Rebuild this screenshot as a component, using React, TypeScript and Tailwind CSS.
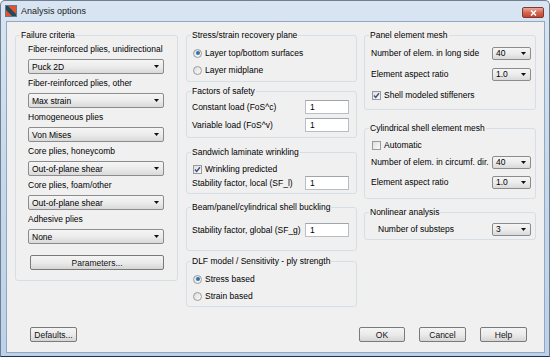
import React from "react"

function GroupBox({ title, className = "", children }: { title: string; className?: string; children: React.ReactNode }) {
  return (
    <fieldset className="rounded-[3px] border border-[#d5dfe5]">
      <legend className="ml-[4px] px-[1px] leading-[12px]">{title}</legend>
      <div className={className}>{children}</div>
    </fieldset>
  )
}

function Combo({ value, className = "" }: { value: string; className?: string }) {
  return (
    <div
      className={
        "flex items-center justify-between rounded-[2px] border border-[#8c8c8c] bg-gradient-to-b from-[#f5f5f5] via-[#ececec] to-[#d9d9d9] pl-[3px] pr-[4px] leading-[12px] " +
        className
      }
    >
      <span>{value}</span>
      <svg width="5" height="3" viewBox="0 0 5 3">
        <path d="M0 0h5L2.5 3z" fill="#111" />
      </svg>
    </div>
  )
}

function TextBox({ value }: { value: string }) {
  return (
    <div className="h-[14px] w-[44px] border border-[#b9bdc4] border-t-[#a0a4ab] bg-white pl-[4px] leading-[12px]">
      {value}
    </div>
  )
}

function Radio({ checked, label }: { checked?: boolean; label: string }) {
  return (
    <div className="flex h-[14px] items-center gap-[2px] pl-[1px]">
      <span className="flex h-[9px] w-[9px] items-center justify-center rounded-full border border-[#9a9a9a] bg-gradient-to-br from-[#dcdcdc] to-[#fbfbfb]">
        {checked && <span className="h-[4px] w-[4px] rounded-full bg-[#2a73b8]" />}
      </span>
      <span className="ml-[1px] leading-[12px]">{label}</span>
    </div>
  )
}

function Check({ checked, label }: { checked?: boolean; label: string }) {
  return (
    <div className="flex h-[14px] items-center gap-[3px] pl-[1px]">
      <span className="flex h-[9px] w-[9px] items-center justify-center border border-[#9a9a9a] bg-gradient-to-br from-[#dedede] to-[#fafafa]">
        {checked && (
          <svg width="7" height="7" viewBox="0 0 7 7">
            <path d="M1 3.6l1.7 1.8L6 1.2" stroke="#3b4f86" strokeWidth="1.4" fill="none" />
          </svg>
        )}
      </span>
      <span className="leading-[12px]">{label}</span>
    </div>
  )
}

function Button({ children, className = "" }: { children: React.ReactNode; className?: string }) {
  return (
    <button
      className={
        "h-[15px] rounded-[2px] border border-[#7a7a7a] bg-gradient-to-b from-[#f4f4f4] via-[#ebebeb] to-[#d5d5d5] leading-[12px] text-[#111] " +
        className
      }
    >
      {children}
    </button>
  )
}

const failure = [
  ["Fiber-reinforced plies, unidirectional", "Puck 2D"],
  ["Fiber-reinforced plies, other", "Max strain"],
  ["Homogeneous plies", "Von Mises"],
  ["Core plies, honeycomb", "Out-of-plane shear"],
  ["Core plies, foam/other", "Out-of-plane shear"],
  ["Adhesive plies", "None"],
]

export default function App() {
  return (
    <div className="flex h-[357px] w-[550px] flex-col rounded-t-[5px] border border-[#6e7f90] border-b-[#1f3446] bg-gradient-to-b from-[#d9e5f3] via-[#c6d8ec] to-[#bcd2ea] font-['Liberation_Sans',Arial,sans-serif] text-[8.5px] text-black">
      {/* title bar */}
      <div className="flex h-[20px] items-center pl-[4px] pr-[5px]">
        <svg width="12" height="12" viewBox="0 0 12 12">
          <rect width="12" height="12" fill="#1f4a60" />
          <path d="M2 0H12V10Z" fill="#e4532b" />
          <path d="M0 4L8 12H0Z" fill="#e4532b" />
          <rect x="0.5" y="0.5" width="11" height="11" fill="none" stroke="#6b7a88" />
        </svg>
        <span className="ml-[4px] text-[9px] leading-[12px] text-[#1b1b1b]">Analysis options</span>
        <div className="mt-[6px] ml-auto flex h-[11px] w-[22px] self-start items-center justify-center rounded-[2px] border border-[#7b3b32] bg-gradient-to-b from-[#e9a99b] via-[#d46652] to-[#c5432d]">
          <svg width="7" height="6" viewBox="0 0 7 6">
            <path d="M1 0.5L6 5.5M6 0.5L1 5.5" stroke="#fff" strokeWidth="1.5" />
          </svg>
        </div>
      </div>

      {/* client area */}
      <div className="mb-[3px] ml-[5px] mr-[4px] flex flex-1 flex-col border border-[#93a8bf] bg-[#f0f0f0]">
        <div className="flex pl-[8px] pt-[7px]">
          {/* left column */}
          <div className="w-[163px]">
            <GroupBox title="Failure criteria" className="pb-[10px] pl-[12px] pr-[13px] pt-[2px]">
              <div className="flex flex-col gap-[3px]">
                {failure.map(([label, value]) => (
                  <div key={label} className="flex flex-col gap-[4px]">
                    <span className="leading-[12px]">{label}</span>
                    <Combo value={value} className="h-[15px]" />
                  </div>
                ))}
              </div>
              <Button className="ml-[2px] mt-[11px] w-[134px]">Parameters...</Button>
            </GroupBox>
          </div>

          {/* middle column */}
          <div className="ml-[8px] flex w-[171px] flex-col">
            <GroupBox title="Stress/strain recovery plane" className="flex flex-col gap-[3px] pb-[4px] pl-[5px] pt-[5px]">
              <Radio checked label="Layer top/bottom surfaces" />
              <Radio label="Layer midplane" />
            </GroupBox>
            <div className="mt-[3px]">
              <GroupBox title="Factors of safety" className="flex flex-col gap-[4px] pb-[5px] pl-[5px] pr-[7px] pt-[3px]">
                <div className="flex items-center justify-between">
                  <span className="leading-[12px]">Constant load (FoS^c)</span>
                  <TextBox value="1" />
                </div>
                <div className="flex items-center justify-between">
                  <span className="leading-[12px]">Variable load (FoS^v)</span>
                  <TextBox value="1" />
                </div>
              </GroupBox>
            </div>
            <div className="mt-[8px]">
              <GroupBox title="Sandwich laminate wrinkling" className="flex flex-col pb-[3px] pl-[5px] pr-[7px] pt-[4px]">
                <Check checked label="Wrinkling predicted" />
                <div className="flex items-center justify-between">
                  <span className="leading-[12px]">Stability factor, local (SF_l)</span>
                  <TextBox value="1" />
                </div>
              </GroupBox>
            </div>
            <div className="mt-[7px]">
              <GroupBox title="Beam/panel/cylindrical shell buckling" className="pb-[13px] pl-[5px] pr-[7px] pt-[10px]">
                <div className="flex items-center justify-between">
                  <span className="leading-[12px]">Stability factor, global (SF_g)</span>
                  <TextBox value="1" />
                </div>
              </GroupBox>
            </div>
            <div className="mt-[4px]">
              <GroupBox title="DLF model / Sensitivity - ply strength" className="flex flex-col gap-[3px] pb-[3px] pl-[5px] pt-[5px]">
                <Radio checked label="Stress based" />
                <Radio label="Strain based" />
              </GroupBox>
            </div>
          </div>

          {/* right column */}
          <div className="ml-[7px] flex w-[172px] flex-col">
            <GroupBox title="Panel element mesh" className="flex flex-col gap-[7px] pb-[7px] pl-[6px] pr-[4px] pt-[5px]">
              <div className="flex h-[14px] items-center justify-between">
                <span className="leading-[12px]">Number of elem. in long side</span>
                <Combo value="40" className="h-[13px] w-[39px]" />
              </div>
              <div className="flex h-[14px] items-center justify-between">
                <span className="leading-[12px]">Element aspect ratio</span>
                <Combo value="1.0" className="h-[13px] w-[39px]" />
              </div>
              <Check checked label="Shell modeled stiffeners" />
            </GroupBox>
            <div className="mt-[12px]">
              <GroupBox title="Cylindrical shell element mesh" className="flex flex-col pb-[9px] pl-[6px] pr-[4px] pt-[4px]">
                <Check label="Automatic" />
                <div className="mt-[3px] flex h-[14px] items-center justify-between">
                  <span className="leading-[12px]">Number of elem. in circumf. dir.</span>
                  <Combo value="40" className="h-[13px] w-[39px]" />
                </div>
                <div className="mt-[6px] flex h-[14px] items-center justify-between">
                  <span className="leading-[12px]">Element aspect ratio</span>
                  <Combo value="1.0" className="h-[13px] w-[39px]" />
                </div>
              </GroupBox>
            </div>
            <div className="mt-[7px]">
              <GroupBox title="Nonlinear analysis" className="pb-[3px] pl-[13px] pr-[4px] pt-[4px]">
                <div className="flex h-[14px] items-center justify-between">
                  <span className="leading-[12px]">Number of substeps</span>
                  <Combo value="3" className="h-[13px] w-[39px]" />
                </div>
              </GroupBox>
            </div>
          </div>
        </div>

        {/* bottom buttons */}
        <div className="mt-auto flex items-center pb-[10px] pl-[23px] pr-[17px]">
          <Button className="w-[47px]">Defaults...</Button>
          <div className="ml-auto flex gap-[14px]">
            <Button className="w-[46px]">OK</Button>
            <Button className="w-[47px]">Cancel</Button>
            <Button className="w-[47px]">Help</Button>
          </div>
        </div>
      </div>
    </div>
  )
}
